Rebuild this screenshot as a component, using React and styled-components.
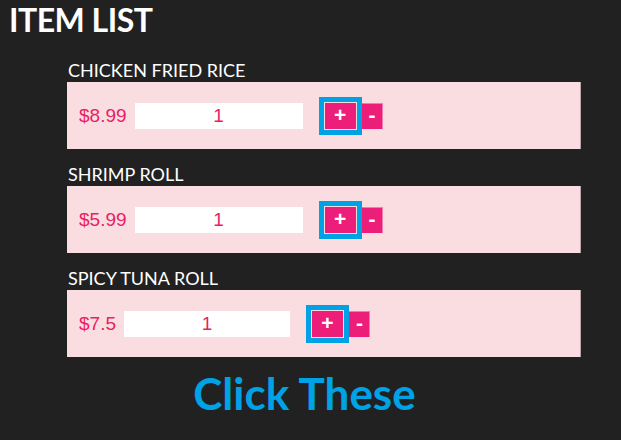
import React from "react";
import styled, { createGlobalStyle } from "styled-components";

const GlobalStyle = createGlobalStyle`
  html, body {
    margin: 0;
    padding: 0;
    background: #212121;
  }
  body {
    font-family: Lato, "Liberation Sans", sans-serif;
  }
`;

const Page = styled.div`
  width: 621px;
  height: 440px;
  background: #212121;
  overflow: hidden;
  box-sizing: border-box;
  padding-top: 1px;
`;

const Title = styled.h1`
  margin: 0 0 0 9px;
  font-family: Lato, sans-serif;
  font-weight: 700;
  font-size: 32px;
  line-height: 38px;
  color: #ffffff;
  letter-spacing: -0.5px;
`;

const List = styled.div`
  display: flex;
  flex-direction: column;
  gap: 15px;
  margin: 21px 40px 0 67px;
`;

const Item = styled.div`
  display: flex;
  flex-direction: column;
  gap: 2px;
`;

const Name = styled.div`
  font-family: Lato, sans-serif;
  font-size: 18px;
  line-height: 20px;
  color: #ffffff;
  padding-left: 1px;
`;

const Card = styled.div`
  height: 67px;
  background: #fadde1;
  display: flex;
  align-items: center;
  padding-left: 12px;
  box-sizing: border-box;
  border-right: 1px solid #b9a3a6;
`;

const Price = styled.span`
  font-family: "Liberation Sans", Arial, sans-serif;
  font-size: 19px;
  color: #e91e63;
  margin-right: 8px;
`;

const Qty = styled.div`
  width: ${(p) => p.$w}px;
  height: 26px;
  background: #ffffff;
  display: flex;
  align-items: center;
  justify-content: center;
  font-family: "Liberation Sans", Arial, sans-serif;
  font-size: 19px;
  color: #e91e63;
  margin-right: 22px;
`;

const Btn = styled.button`
  width: ${(p) => p.$w}px;
  height: 26px;
  padding: 0 0 2px;
  border: none;
  background: #ec1e79;
  color: #ffffff;
  font-family: "Liberation Sans", Arial, sans-serif;
  font-weight: 700;
  font-size: 21px;
  line-height: 24px;
  margin-right: 6px;
  outline: ${(p) => (p.$hl ? "5px solid #00a2e6" : "none")};
  outline-offset: 1px;
  box-shadow: ${(p) => (p.$hl ? "none" : "inset -1px 1px 0 #f47aaf")};
  cursor: pointer;
`;

const Hint = styled.div`
  margin-top: 11px;
  padding-right: 12px;
  text-align: center;
  font-family: Lato, sans-serif;
  font-weight: 700;
  font-size: 44px;
  line-height: 50px;
  color: #00a2e6;
`;

const items = [
  { name: "CHICKEN FRIED RICE", price: "$8.99", w: 168 },
  { name: "SHRIMP ROLL", price: "$5.99", w: 168 },
  { name: "SPICY TUNA ROLL", price: "$7.5", w: 166 },
];

export default function App() {
  return (
    <Page>
      <GlobalStyle />
      <Title>ITEM LIST</Title>
      <List>
        {items.map((it) => (
          <Item key={it.name}>
            <Name>{it.name}</Name>
            <Card>
              <Price>{it.price}</Price>
              <Qty $w={it.w}>1</Qty>
              <Btn $w={31} $hl>+</Btn>
              <Btn $w={21}>-</Btn>
            </Card>
          </Item>
        ))}
      </List>
      <Hint>Click These</Hint>
    </Page>
  );
}
